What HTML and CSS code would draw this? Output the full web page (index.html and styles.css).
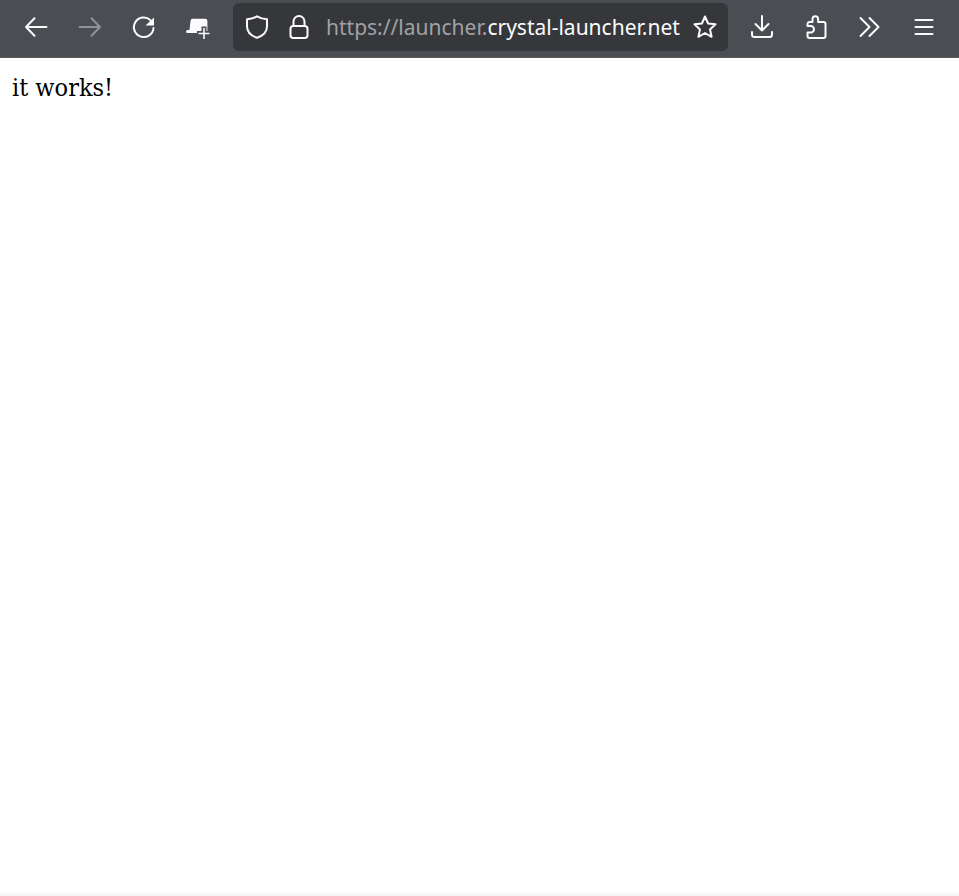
FILE: index.html
```html
<!DOCTYPE html>
<html lang="en">
<head>
<meta charset="utf-8">
<title>it works!</title>
<link rel="stylesheet" href="styles.css">
</head>
<body>
<header class="toolbar">
  <div class="btn"><svg class="icon" viewBox="0 0 24 24"><path d="M22.500 12H2M10.500 3.200 2 12l8.500 8.800"/></svg></div>
  <div class="btn dim"><svg class="icon" viewBox="0 0 24 24"><path d="M1.500 12H22M13.500 3.200 22 12l-8.500 8.800"/></svg></div>
  <div class="btn"><svg class="icon" viewBox="0 0 24 24"><path d="M21.500 13a9.800 9.800 0 1 1-3.200-8"/><path class="fill" d="M22 2.500v8h-8.500z"/></svg></div>
  <div class="btn"><svg class="icon" viewBox="0 0 24 24"><path class="fill" d="M4.500 6a2.200 2.200 0 0 1 2.200-2.200h12.500a2.200 2.200 0 0 1 2.200 2.200v12H1.500a1.500 1.500 0 0 1 0-3H3.500z"/><path class="gap" d="M18 11.500v13.500M11 18.500h13"/><path class="thin" d="M18 13v11M12.500 18.500h11"/></svg></div>
  <div class="urlbar">
    <svg class="icon shield" viewBox="0 0 24 24"><path d="M12 1.300c3 1.700 6.500 2.700 10 3v7c0 5.500-4 9.500-10 11.500-6-2-10-6-10-11.500v-7c3.500-.3 7-1.300 10-3z"/></svg>
    <svg class="icon lock" viewBox="0 0 24 24"><path d="M6.500 11V6.500a5.500 5.500 0 0 1 11 0V11"/><rect x="3.500" y="11" width="17" height="12" rx="2.800"/></svg>
    <div class="url"><span class="scheme">https://launcher.</span>crystal-launcher.net</div>
    <svg class="icon star" viewBox="0 0 24 24"><path d="M12 1.500l3.100 7 7.400.8-5.500 5.100 1.600 7.400-6.600-3.800-6.600 3.800L7 14.400 1.500 9.300l7.400-.8z"/></svg>
  </div>
  <div class="btn"><svg class="icon" viewBox="0 0 24 24"><path d="M12 1v14.500M5.500 9l6.500 6.500L18.500 9M2 17v2.500A2.500 2.500 0 0 0 4.500 22h15a2.500 2.500 0 0 0 2.500-2.500V17"/></svg></div>
  <div class="btn"><svg class="icon" viewBox="0 0 24 24"><path d="M8.500 7V4a2.800 2.800 0 0 1 5.600 0v3h5.400a2 2 0 0 1 2 2v12a2 2 0 0 1-2 2H5.500a2 2 0 0 1-2-2v-3.500h3.200a3.300 3.300 0 0 0 0-6.600H3.500V9a2 2 0 0 1 2-2z"/></svg></div>
  <div class="btn"><svg class="icon" viewBox="0 0 24 24"><path d="M2.500 3 11.500 12l-9 9M11.500 3l9 9-9 9"/></svg></div>
  <div class="btn"><svg class="icon" viewBox="0 0 24 24"><path d="M3.500 5h17M3.500 12h17M3.500 19h17"/></svg></div>
</header>
<main class="page"><p class="message">it works!</p></main>
<div class="edge"></div>
</body>
</html>
```
FILE: styles.css
```css
html, body { margin: 0; height: 100%; }
body { display: flex; flex-direction: column; background: #fff; overflow: hidden; }
.toolbar {
  display: flex; align-items: flex-start; flex: none;
  height: 57px; padding: 0 8px 0 9px; box-sizing: content-box;
  background: #4a4d52; border-bottom: 1px solid #56585c;
}
.btn { flex: none; width: 54px; height: 54px; display: flex; align-items: center; justify-content: center; }
.icon { width: 24px; height: 24px; fill: none; stroke: #fbfbfe; stroke-width: 2; stroke-linecap: round; stroke-linejoin: round; flex: none; overflow: visible; }
.icon .fill { fill: #fbfbfe; stroke: none; }
.icon .thin { stroke-width: 1.600; stroke-linecap: butt; }
.icon .gap { stroke: #4a4d52; stroke-width: 5; stroke-linecap: butt; }
.dim .icon { opacity: .4; }
.urlbar {
  flex: none; display: flex; align-items: center; box-sizing: border-box;
  width: 495px; height: 48px; margin: 3px 7px 0 8px; padding: 0 11px 0 12px;
  background: #36373b; border-radius: 6px;
}
.shield { margin-right: 18px; }
.lock { margin-right: 15px; }
.url { flex: 1; font: 21px/47px "Noto Sans", sans-serif; color: #fbfbfe; white-space: nowrap; }
.scheme { color: #a0a1a5; }
.page { flex: 1; padding: 13px 12px; }
.message { margin: 0; font-family: "DejaVu Serif", serif; font-stretch: condensed; font-size: 25px; line-height: 34px; color: #000; }
.edge { flex: none; height: 5px; background: linear-gradient(#fff, #f3f3f3); }
```
